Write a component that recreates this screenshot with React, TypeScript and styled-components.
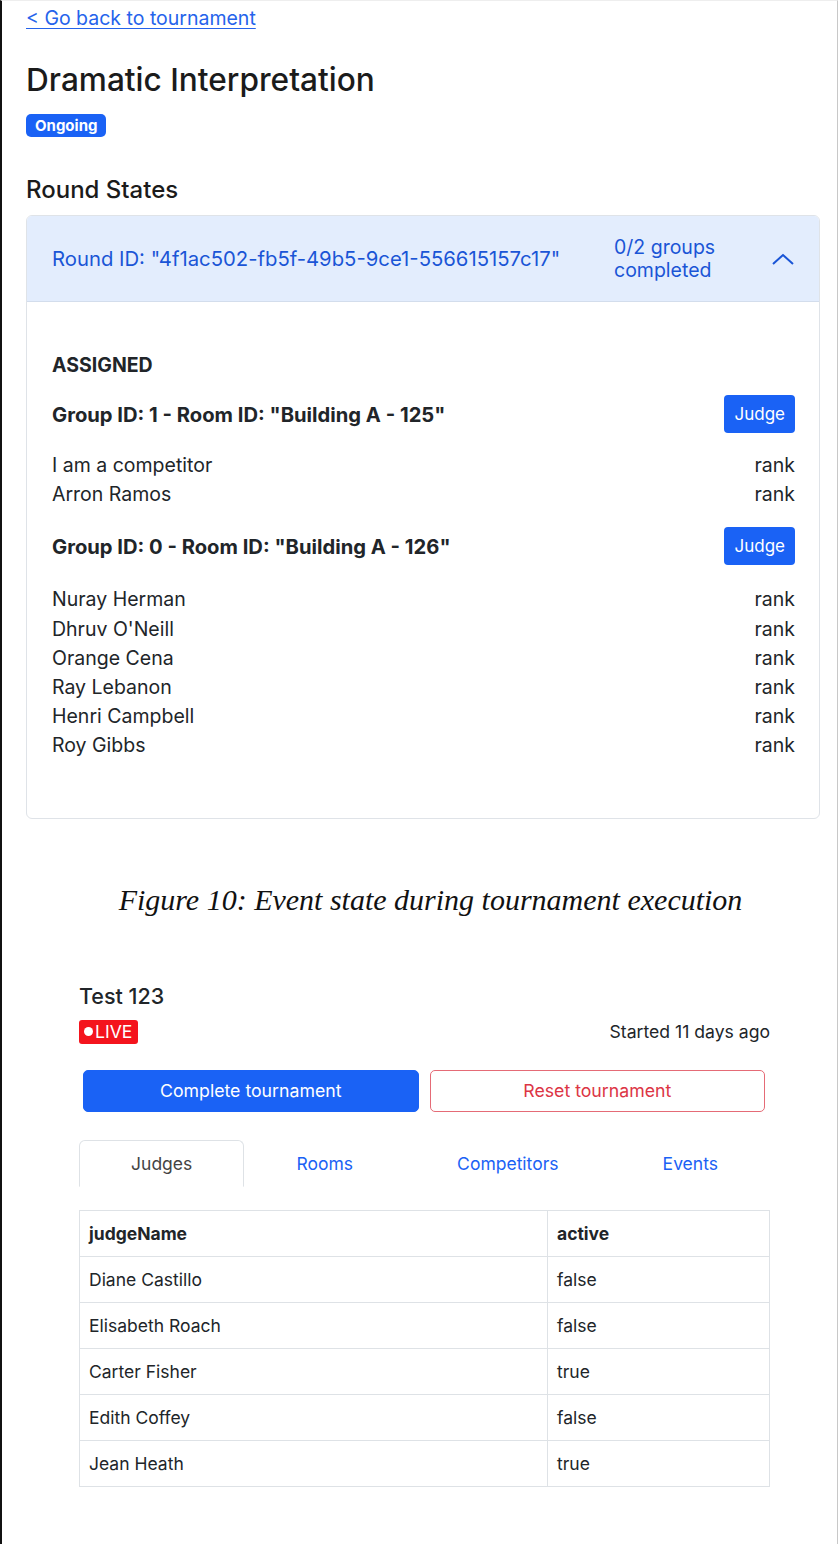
import React from "react";
import styled, { createGlobalStyle } from "styled-components";

const Global = createGlobalStyle`
  html, body { margin: 0; padding: 0; background: #fff; }
  body { font-family: Inter, "Noto Sans", sans-serif; color: #212529; }
  * { box-sizing: border-box; }
`;

const Frame = styled.div`
  min-height: 1544px;
  border-left: 2px solid #111;
  border-right: 1px solid #c8c8c8;
  border-top: 1px solid #eee;
  background: #fff;
`;

const Top = styled.section`
  padding: 5px 17px 0 24px;
`;

const BackLink = styled.a`
  display: inline-block;
  font-size: 19.5px;
  line-height: 24px;
  color: #2563eb;
  text-decoration: underline;
  text-underline-offset: 3px;
  text-decoration-thickness: 1px;
`;

const Title = styled.h1`
  margin: 30px 0 0;
  font-size: 31.6px;
  line-height: 40px;
  font-weight: 500;
  color: #1b1b1b;
`;

const Badge = styled.span`
  display: inline-block;
  margin-top: 14px;
  height: 23px;
  padding: 0 9px;
  border-radius: 5px;
  background: #1a62f5;
  color: #fff;
  font-size: 15px;
  line-height: 23px;
  font-weight: 700;
`;

const SectionTitle = styled.h2`
  margin: 38px 0 0;
  font-size: 24px;
  line-height: 30px;
  font-weight: 500;
  color: #1b1b1b;
`;

const Card = styled.div`
  margin-top: 10px;
  border: 1px solid #dfe3e8;
  border-radius: 6px;
  overflow: hidden;
`;

const CardHeader = styled.div`
  height: 86px;
  display: flex;
  align-items: center;
  padding: 0 24px 0 25px;
  background: #e3edfd;
  border-bottom: 1px solid #d3ddec;
  color: #1a55d6;
`;

const RoundId = styled.div`
  flex: 1;
  font-size: 20.3px;
`;

const Progress = styled.div`
  width: 157px;
  font-size: 19.5px;
  line-height: 23px;
`;

const Chevron = styled.svg`
  width: 24px;
  height: 14px;
`;

const CardBody = styled.div`
  padding: 51px 24px 57px 25px;
`;

const Assigned = styled.div`
  font-size: 19.5px;
  line-height: 24px;
  font-weight: 700;
`;

const GroupRow = styled.div`
  margin-top: 18px;
  display: flex;
  align-items: center;
  justify-content: space-between;
`;

const GroupTitle = styled.div`
  font-size: 20.2px;
  font-weight: 700;
`;

const SmallButton = styled.button`
  height: 38px;
  padding: 0 10px;
  border: none;
  border-radius: 4px;
  background: #1a62f5;
  color: #fff;
  font-family: inherit;
  font-size: 17px;
`;

const NameList = styled.div<{ $gap: number }>`
  margin: ${(p) => p.$gap}px 0 0;
`;

const NameRow = styled.div`
  display: flex;
  justify-content: space-between;
  font-size: 19.5px;
  line-height: 29.2px;
`;

const Caption = styled.p`
  margin: 64px 0 0;
  text-align: center;
  font-family: "Liberation Serif", "Times New Roman", serif;
  font-style: italic;
  font-size: 30px;
  line-height: 34px;
  color: #111;
  padding-left: 22px;
`;

const Bottom = styled.section`
  margin: 66px 0 0 77px;
  width: 691px;
`;

const EventName = styled.div`
  font-size: 21.5px;
  line-height: 26px;
  font-weight: 500;
`;

const StatusRow = styled.div`
  margin-top: 11px;
  display: flex;
  justify-content: space-between;
  align-items: center;
  font-size: 17.6px;
`;

const Live = styled.span`
  display: inline-flex;
  align-items: center;
  gap: 2px;
  background: #f4141d;
  color: #fff;
  border-radius: 3px;
  height: 24px;
  padding: 0 6px 0 5px;
  font-size: 17.6px;
`;

const Dot = styled.span`
  width: 9px;
  height: 9px;
  border-radius: 50%;
  background: #fff;
`;

const ButtonRow = styled.div`
  margin-top: 26px;
  padding: 0 5px 0 4px;
  display: grid;
  grid-template-columns: 1fr 1fr;
  gap: 11px;
`;

const ActionButton = styled.button<{ $variant: "primary" | "danger" }>`
  height: 42px;
  border-radius: 5px;
  font-family: inherit;
  font-size: 17.7px;
  border: 1px solid ${(p) => (p.$variant === "primary" ? "#1a62f5" : "#e56b76")};
  background: ${(p) => (p.$variant === "primary" ? "#1a62f5" : "#fff")};
  color: ${(p) => (p.$variant === "primary" ? "#fff" : "#dc3545")};
`;

const Tabs = styled.div`
  margin-top: 28px;
  display: flex;
  border-bottom: 1px solid #dee2e6;
`;

const Tab = styled.div<{ $active?: boolean }>`
  flex: 1 1 auto;
  text-align: center;
  height: 47px;
  line-height: 46px;
  margin-bottom: -1px;
  font-size: 17.5px;
  border: 1px solid ${(p) => (p.$active ? "#dee2e6" : "transparent")};
  border-bottom-color: ${(p) => (p.$active ? "#fff" : "transparent")};
  border-radius: 6px 6px 0 0;
  background: #fff;
  color: ${(p) => (p.$active ? "#444" : "#1a62f5")};
`;

const Table = styled.table`
  margin-top: 23px;
  width: 100%;
  border-collapse: collapse;
  font-size: 17.5px;
`;

const Th = styled.th<{ $w?: number }>`
  height: 46px;
  text-align: left;
  padding: 0 9px;
  font-weight: 700;
  border: 1px solid #dee2e6;
  width: ${(p) => (p.$w ? `${p.$w}px` : "auto")};
`;

const Td = styled.td`
  height: 46px;
  padding: 0 9px;
  border: 1px solid #dee2e6;
`;

const groups = [
  {
    title: 'Group ID: 1 - Room ID: "Building A - 125"',
    names: ["I am a competitor", "Arron Ramos"],
    gap: 18,
  },
  {
    title: 'Group ID: 0 - Room ID: "Building A - 126"',
    names: ["Nuray Herman", "Dhruv O'Neill", "Orange Cena", "Ray Lebanon", "Henri Campbell", "Roy Gibbs"],
    gap: 20,
  },
];

const judges: [string, string][] = [
  ["Diane Castillo", "false"],
  ["Elisabeth Roach", "false"],
  ["Carter Fisher", "true"],
  ["Edith Coffey", "false"],
  ["Jean Heath", "true"],
];

export default function App() {
  return (
    <Frame>
      <Global />
      <Top>
        <BackLink href="#">&lt; Go back to tournament</BackLink>
        <Title>Dramatic Interpretation</Title>
        <Badge>Ongoing</Badge>
        <SectionTitle>Round States</SectionTitle>
        <Card>
          <CardHeader>
            <RoundId>Round ID: "4f1ac502-fb5f-49b5-9ce1-556615157c17"</RoundId>
            <Progress>
              0/2 groups
              <br />
              completed
            </Progress>
            <Chevron viewBox="0 0 24 14">
              <polyline points="2,12 12,3 22,12" fill="none" stroke="#1a55d6" strokeWidth="2" />
            </Chevron>
          </CardHeader>
          <CardBody>
            <Assigned>ASSIGNED</Assigned>
            {groups.map((g) => (
              <React.Fragment key={g.title}>
                <GroupRow>
                  <GroupTitle>{g.title}</GroupTitle>
                  <SmallButton>Judge</SmallButton>
                </GroupRow>
                <NameList $gap={g.gap}>
                  {g.names.map((n) => (
                    <NameRow key={n}>
                      <span>{n}</span>
                      <span>rank</span>
                    </NameRow>
                  ))}
                </NameList>
              </React.Fragment>
            ))}
          </CardBody>
        </Card>
      </Top>
      <Caption>Figure 10: Event state during tournament execution</Caption>
      <Bottom>
        <EventName>Test 123</EventName>
        <StatusRow>
          <Live>
            <Dot />
            LIVE
          </Live>
          <span>Started 11 days ago</span>
        </StatusRow>
        <ButtonRow>
          <ActionButton $variant="primary">Complete tournament</ActionButton>
          <ActionButton $variant="danger">Reset tournament</ActionButton>
        </ButtonRow>
        <Tabs>
          <Tab $active>Judges</Tab>
          <Tab>Rooms</Tab>
          <Tab>Competitors</Tab>
          <Tab>Events</Tab>
        </Tabs>
        <Table>
          <thead>
            <tr>
              <Th $w={468}>judgeName</Th>
              <Th>active</Th>
            </tr>
          </thead>
          <tbody>
            {judges.map(([n, a]) => (
              <tr key={n}>
                <Td>{n}</Td>
                <Td>{a}</Td>
              </tr>
            ))}
          </tbody>
        </Table>
      </Bottom>
    </Frame>
  );
}
